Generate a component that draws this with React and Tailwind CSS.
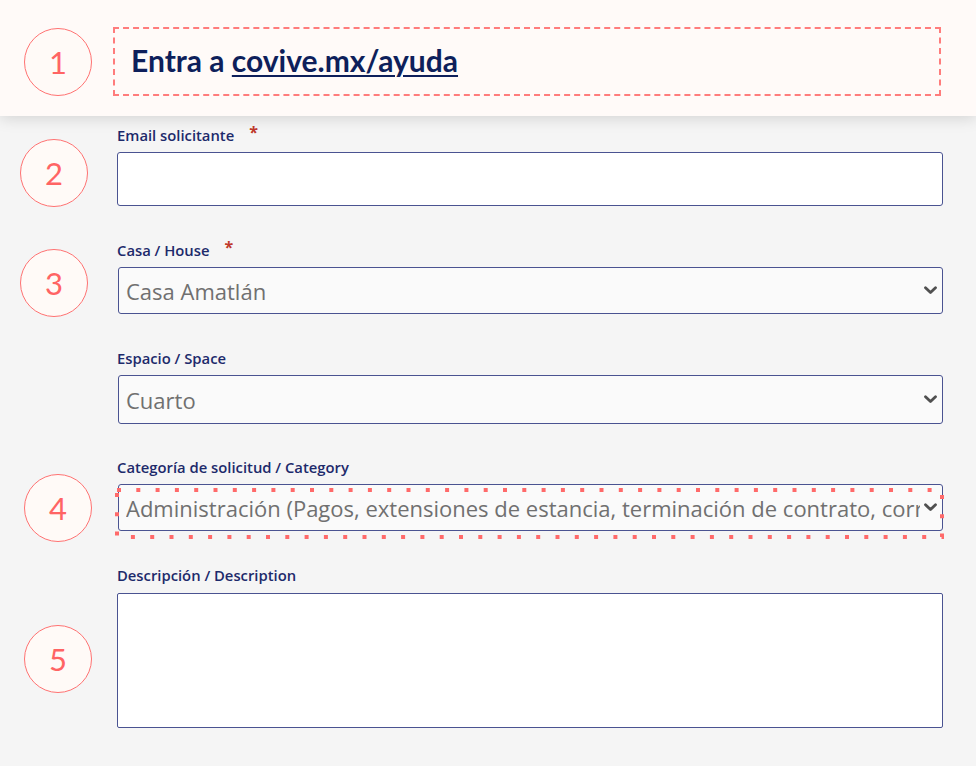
import React from "react";

const Marker = ({ n, className }) => (
  <div
    className={`absolute w-[68px] h-[68px] rounded-full border-[1.5px] border-[#ff7272] bg-[#fffaf7] flex items-center justify-center text-[31px] font-normal text-[#ff6464] font-['Lato',sans-serif] ${className}`}
  >
    {n}
  </div>
);

const Label = ({ children, required }) => (
  <div className="h-5 flex items-center text-[14.8px] leading-5 font-semibold text-[#1d2a6b]">
    {children}
    {required && (
      <span className="ml-[15px] text-[#c0392b] text-[16px] font-bold -mt-[6px]">*</span>
    )}
  </div>
);

const Chevron = () => (
  <svg className="w-[13px] h-[9px] shrink-0" viewBox="0 0 13 9" fill="none">
    <path d="M1.5 1.8 6.5 6.6 11.5 1.8" stroke="#505050" strokeWidth="2.8" strokeLinecap="round" strokeLinejoin="round" />
  </svg>
);

const SelectBox = ({ value, h = "h-[48px]" }) => (
  <div
    className={`${h} mt-[7px] ml-px flex items-center bg-[#fafafa] border-[1.5px] border-[#4a5391] rounded-[3px] pl-[7px] pr-[5px] gap-[4px]`}
  >
    <div className="flex-1 overflow-hidden whitespace-nowrap text-[22px] text-[#707070] leading-[28px]">
      {value}
    </div>
    <Chevron />
  </div>
);

export default function App() {
  return (
    <div className="relative w-[976px] h-[766px] overflow-hidden bg-[#f5f5f5] font-['Open_Sans',sans-serif]">
      {/* header */}
      <div className="relative z-10 h-[116px] bg-[#fffaf8] shadow-[0_3px_14px_rgba(0,0,0,0.13)] pt-[27px] pl-[113px]">
        <div className="w-[828px] h-[69px] border-2 border-dashed border-[#ff7c7c] flex items-center pl-[16px] pb-[2px]">
          <span className="font-['Lato',sans-serif] font-bold text-[30px] text-[#0e1f5b]">
            Entra a{" "}
            <span className="underline decoration-[2px] underline-offset-[3px]">covive.mx/ayuda</span>
          </span>
        </div>
      </div>

      {/* form */}
      <div className="pl-[117px] pr-[33px] pt-[9px]">
        <Label required>Email solicitante</Label>
        <div className="mt-[7px] h-[54px] bg-white border-[1.5px] border-[#4a5391] rounded-[3px]" />

        <div className="mt-[34px]">
          <Label required>Casa / House</Label>
          <SelectBox value="Casa Amatlán" h="h-[47px]" />
        </div>

        <div className="mt-[34px]">
          <Label>Espacio / Space</Label>
          <SelectBox value="Cuarto" h="h-[49px]" />
        </div>

        <div className="mt-[33px]">
          <Label>Categoría de solicitud / Category</Label>
          <div className="relative">
            <SelectBox
              value="Administración (Pagos, extensiones de estancia, terminación de contrato, correos, etc.)"
              h="h-[47px]"
            />
            <svg
              className="absolute left-[-2px] top-[4px] w-[829px] h-[51px] pointer-events-none"
              viewBox="0 0 829 51"
              fill="none"
            >
              <rect
                x="2"
                y="2"
                width="825"
                height="47"
                stroke="#ff6a6a"
                strokeWidth="4"
                strokeDasharray="4 15.3"
              />
            </svg>
          </div>
        </div>

        <div className="mt-[34px]">
          <Label>Descripción / Description</Label>
          <div className="mt-[8px] h-[135px] bg-white border-[1.5px] border-[#4a5391] rounded-[2px]" />
        </div>
      </div>

      {/* step markers */}
      <Marker n="1" className="left-[24px] top-[28px] z-20" />
      <Marker n="2" className="left-[20px] top-[139px]" />
      <Marker n="3" className="left-[20px] top-[249px]" />
      <Marker n="4" className="left-[24px] top-[474px]" />
      <Marker n="5" className="left-[24px] top-[625px]" />
    </div>
  );
}
